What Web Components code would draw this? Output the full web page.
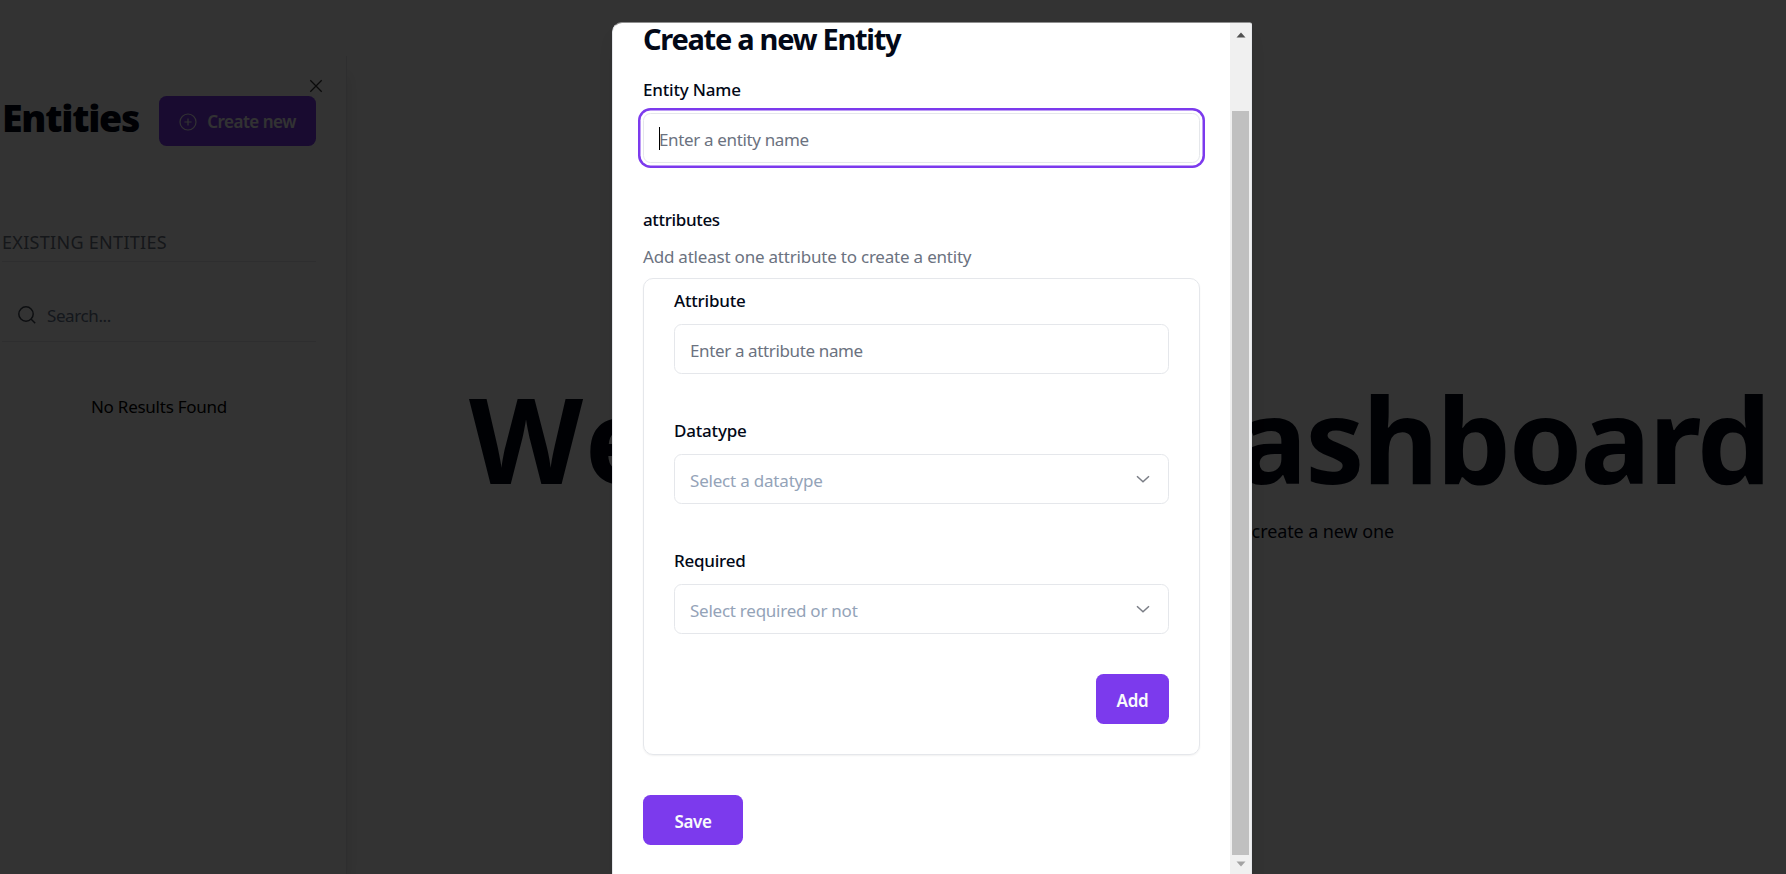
<!DOCTYPE html>
<html lang="en">
<head>
<meta charset="utf-8">
<title>Entities</title>
<style>
html, body { margin: 0; height: 100%; overflow: hidden; background: #fff; }
body { font-family: "Noto Sans", "Open Sans", sans-serif; font-size: 17px; color: #020817; }
</style>
</head>
<body>
<app-shell></app-shell>
<script>
const define = (name, html) => {
  const tpl = document.createElement('template');
  tpl.innerHTML = html;
  customElements.define(name, class extends HTMLElement {
    constructor() {
      super();
      this.attachShadow({ mode: 'open' }).append(tpl.content.cloneNode(true));
    }
  });
};

define('ui-button', `
<style>
:host { display: inline-flex; align-items: center; justify-content: center; height: 50px; border-radius: 7.5px;
  box-sizing: border-box; background: #7c3aed; color: #f8fafc; font-weight: 600; line-height: 25px; white-space: nowrap; padding-top: 1px; }
</style><slot></slot>`);

define('ui-field', `
<style>
:host { display: block; }
.label { font-weight: 500; line-height: 18px; height: 18px; white-space: nowrap; }
.box { position: relative; display: flex; align-items: center; justify-content: space-between; box-sizing: border-box;
  height: 50px; margin-top: 14px; padding: 3px 16px 0 15px; border: 1px solid #e5e7eb; border-radius: 7.5px;
  background: #fff; color: #6b7280; white-space: nowrap; }
:host([select]) .box { color: #94a3b8; }
:host([focused]) .box { box-shadow: 0 0 0 2.5px #fff, 0 0 0 5px #7c3aed; }
.caret { display: none; position: absolute; left: 15px; top: 13px; width: 1px; height: 23px; background: #000; }
:host([focused]) .caret { display: block; }
svg { display: none; margin-top: -4px; }
:host([select]) svg { display: block; }
</style>
<div class="label"><slot name="label"></slot></div>
<div class="box"><i class="caret"></i><slot></slot>
<svg width="18" height="18" viewBox="0 0 18 18" fill="none" stroke="#7b7e86" stroke-width="1.5"><path d="M3 6.2l6 5.6 6-5.6"/></svg></div>`);

define('entity-sidebar', `
<style>
:host { display: flex; flex-direction: column; box-sizing: border-box; width: 347px; height: 818px; margin-top: 56px;
  padding: 40px 30px 0 2px; border-right: 1px solid #e5e7eb; position: relative; box-shadow: 8px 12px 14px -6px rgba(0,0,0,.1); }
.top { display: flex; justify-content: space-between; height: 50px; }
h1 { margin: 0; font-size: 37.5px; line-height: 44px; font-weight: 900; letter-spacing: -1.25px; white-space: nowrap; }
ui-button { width: 157px; flex: none; gap: 10px; }
.close { position: absolute; left: 309px; top: 23px; }
h2 { margin: 81px 0 0; height: 34px; line-height: 31px; font-size: 18px; font-weight: 400; color: #6b7280; border-bottom: 1px solid #e5e7eb; letter-spacing: .3px; white-space: nowrap; }
.search { display: flex; align-items: center; gap: 10px; box-sizing: border-box; height: 50px; margin-top: 30px; padding: 0 0 1px 15px; border-bottom: 1px solid #e5e7eb; color: #64748b; }
.search svg { margin-top: -2px; }
.search span { letter-spacing: -.4px; margin-top: -1px; }
.empty { margin-top: 50px; line-height: 30px; text-align: center; color: #000; letter-spacing: -.25px; }
</style>
<svg class="close" width="14" height="14" viewBox="0 0 14 14" stroke="#000" stroke-width="1.3" opacity=".8"><path d="M1.3 1.3l11.4 11.4M12.7 1.3L1.3 12.7"/></svg>
<div class="top"><h1>Entities</h1><ui-button>
<svg width="18" height="18" viewBox="0 0 18 18" fill="none" stroke="#f8fafc" stroke-width="1.2"><circle cx="9" cy="9" r="8"/><path d="M9 5.4v7.2M5.4 9h7.2"/></svg><span style="letter-spacing:-.5px">Create new</span></ui-button></div>
<h2>EXISTING ENTITIES</h2>
<div class="search"><svg width="20" height="20" viewBox="0 0 20 20" fill="none" stroke="#3f4652" stroke-width="1.5"><circle cx="9" cy="9" r="7.2"/><path d="M14.2 14.2l4 4"/></svg><span>Search...</span></div>
<div class="empty">No Results Found</div>`);

define('welcome-panel', `
<style>
:host { display: flex; flex-direction: column; box-sizing: border-box; width: 1295px; margin: 357px 0 0 122px; white-space: nowrap; }
h1 { display: flex; justify-content: space-between; margin: 0; font-size: 118px; line-height: 164px; height: 164px; font-weight: 700; color: #020817; }
.first { letter-spacing: 4px; } .last { letter-spacing: -2.3px; margin-right: -5px; }
p { align-self: flex-end; margin: -4px 370px 0 0; line-height: 28px; font-size: 18px; letter-spacing: -.1px; }
</style>
<h1><span class="first">Welcome</span><span class="last">Dashboard</span></h1>
<p>Choose an existing entity from the sidebar or create a new one</p>`);

define('scroll-rail', `
<style>
:host { display: flex; flex-direction: column; align-items: center; width: 21px; background: #f0f0f0; flex: none; }
.arrow { display: flex; align-items: center; justify-content: center; height: 19px; width: 100%; }
.up { padding-top: 2px; height: 17px; margin-top: 1px; }
.thumb { width: 17px; height: 744px; margin-top: 68px; background: #c0c0c0; }
.down { height: 17px; }
</style>
<div class="arrow up"><svg width="10" height="6"><path d="M.5 5.5L5 .5l4.500 5z" fill="#505050"/></svg></div>
<div class="thumb"></div>
<div class="arrow down"><svg width="10" height="6"><path d="M.5 .5h9L5 5.500z" fill="#a3a3a3"/></svg></div>`);

define('entity-dialog', `
<style>
:host { display: flex; box-sizing: border-box; width: 640px; height: 860px; border: 1px solid #e5e7eb; border-top-color: #8f8f8f;
  border-radius: 10px 3px 0 0; background: #fff; overflow: hidden; box-shadow: 0 12px 18px -4px rgba(0,0,0,.1); }
.body { flex: 1; padding: 0 30px; white-space: nowrap; }
h2 { margin: 0; line-height: 32px; height: 34px; font-size: 29px; font-weight: 700; letter-spacing: -1.27px; }
.name { margin-top: 24px; }
.attr { margin-top: 48px; line-height: 18px; font-weight: 500; }
.hint { margin-top: 16px; line-height: 24px; color: #6b7280; }
.card { box-sizing: border-box; height: 477px; margin-top: 9px; padding: 13px 30px 0; border: 1px solid #e5e7eb; border-radius: 10px; box-shadow: 0 1px 2px rgba(0,0,0,.06); }
.card ui-field + ui-field { margin-top: 48px; }
.row { display: flex; justify-content: flex-end; margin-top: 40px; }
ui-button { padding-top: 3px; }
</style>
<div class="body">
<h2>Create a new Entity</h2>
<ui-field class="name" focused><span slot="label" style="letter-spacing:-.2px">Entity Name</span><span style="letter-spacing:-.35px">Enter a entity name</span></ui-field>
<div class="attr"><span style="letter-spacing:-.35px">attributes</span></div>
<div class="hint"><span style="letter-spacing:-.21px">Add atleast one attribute to create a entity</span></div>
<div class="card">
<ui-field><span slot="label" style="letter-spacing:-.2px">Attribute</span><span style="letter-spacing:-.37px">Enter a attribute name</span></ui-field>
<ui-field select><span slot="label" style="letter-spacing:-.2px">Datatype</span><span style="letter-spacing:-.2px">Select a datatype</span></ui-field>
<ui-field select><span slot="label" style="letter-spacing:-.25px">Required</span><span style="letter-spacing:-.25px">Select required or not</span></ui-field>
<div class="row"><ui-button style="width:73px"><span style="letter-spacing:-.3px">Add</span></ui-button></div>
</div>
<ui-button style="width:100px;margin-top:40px"><span style="letter-spacing:-.4px">Save</span></ui-button>
</div>
<scroll-rail></scroll-rail>`);

define('app-shell', `
<style>
:host { display: block; position: relative; width: 1786px; height: 874px; overflow: hidden; }
.page { display: flex; align-items: flex-start; }
.overlay { position: absolute; inset: 0; background: rgba(0,0,0,.8); }
entity-dialog { position: absolute; left: 612px; top: 22px; }
</style>
<div class="page"><entity-sidebar></entity-sidebar><welcome-panel></welcome-panel></div>
<div class="overlay"></div>
<entity-dialog></entity-dialog>`);
</script>
</body>
</html>
